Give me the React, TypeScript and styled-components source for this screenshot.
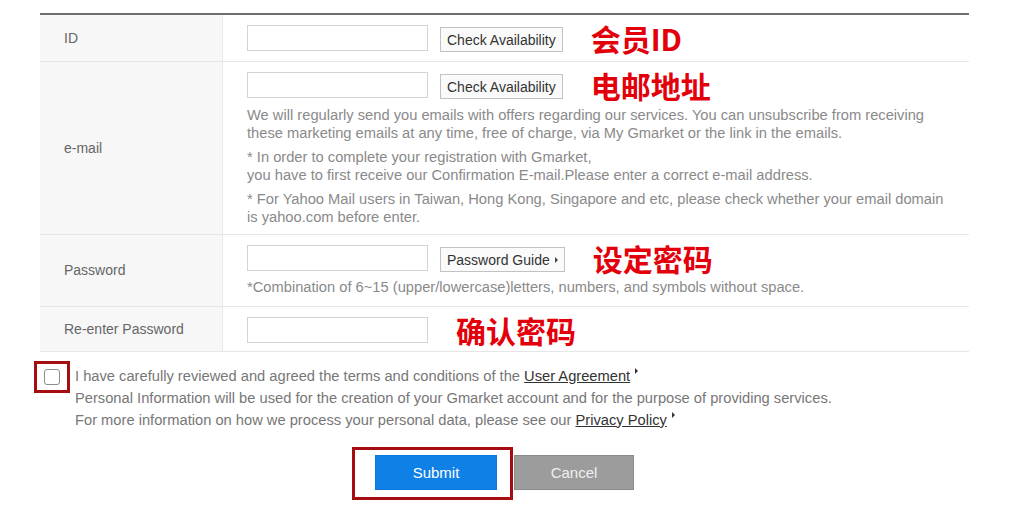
import styled, { createGlobalStyle } from "styled-components";

const GlobalStyle = createGlobalStyle`
  body {
    margin: 0;
    background: #fff;
    font-family: "Liberation Sans", Arial, sans-serif;
  }
`;

const Page = styled.div`
  padding: 13px 0 20px 34px;
  width: 935px;
`;

const FormTable = styled.div`
  margin-left: 6px;
  width: 929px;
  border-top: 2px solid #6e6e6e;
`;

const Row = styled.div`
  display: grid;
  grid-template-columns: 183px 1fr;
  border-bottom: 1px solid #e6e6e6;
`;

const Label = styled.div`
  display: flex;
  align-items: center;
  padding-left: 24px;
  background: #f7f7f7;
  border-right: 1px solid #e9e9e9;
  color: #666;
  font-size: 14px;
`;

const Field = styled.div<{ $bottom?: number }>`
  padding: 10px 0 ${(p) => p.$bottom ?? 9}px 24px;
`;

const Line = styled.div`
  display: flex;
  align-items: center;
  height: 26px;
`;

const TextInput = styled.input`
  box-sizing: border-box;
  width: 181px;
  height: 26px;
  margin: 0;
  border: 1px solid #d4d4d4;
  background: #fff;
`;

const SmallButton = styled.button`
  box-sizing: border-box;
  height: 25px;
  margin: 3px 0 0 12px;
  padding: 0 6px;
  border: 1px solid #c2c2c2;
  background: #fafafa;
  color: #333;
  font-family: inherit;
  font-size: 14px;
  display: flex;
  align-items: center;
  gap: 5px;
`;

const Caret = styled.span<{ $color?: string }>`
  display: inline-block;
  width: 0;
  height: 0;
  border-left: 3px solid ${(p) => p.$color || "#444"};
  border-top: 3px solid transparent;
  border-bottom: 3px solid transparent;
`;

const Note = styled.span`
  margin-left: 28px;
  color: #e3000b;
  font-family: "Noto Sans CJK SC", "Noto Sans", sans-serif;
  font-weight: 700;
  font-size: 30px;
  line-height: 26px;
`;

const Hint = styled.p<{ $gap?: number }>`
  margin: ${(p) => p.$gap ?? 7}px 0 0;
  color: #8a8a8a;
  font-size: 14.7px;
  line-height: 17.5px;
`;

const Agreement = styled.div`
  display: flex;
  align-items: flex-start;
  margin-top: 9px;
`;

const CheckFrame = styled.div`
  padding: 5px 7px;
  border: 3px solid #a50d12;
`;

const CheckBox = styled.span`
  display: block;
  box-sizing: border-box;
  width: 16px;
  height: 16px;
  border: 1px solid #8c8c8c;
  border-radius: 3px;
  background: #fff;
`;

const AgreeText = styled.div`
  margin: 4px 0 0 5px;
  color: #777;
  font-size: 14.7px;
  line-height: 22px;
`;

const Link = styled.a`
  color: #333;
  text-decoration: underline;
`;

const UpCaret = styled(Caret)`
  margin-left: 5px;
  vertical-align: 7px;
`;

const Actions = styled.div`
  display: flex;
  align-items: center;
  margin: 16px 0 0 318px;
`;

const SubmitFrame = styled.div`
  padding: 5px 13px 7px 20px;
  border: 3px solid #a50d12;
`;

const ActionButton = styled.button<{ $primary?: boolean }>`
  box-sizing: border-box;
  width: ${(p) => (p.$primary ? "122px" : "120px")};
  height: 35px;
  margin: ${(p) => (p.$primary ? "0" : "-2px 0 0 1px")};
  border: 1px solid ${(p) => (p.$primary ? "#0b76db" : "#8a8a8a")};
  background: ${(p) => (p.$primary ? "#0f80e6" : "#9c9c9c")};
  color: ${(p) => (p.$primary ? "#fff" : "#f0f0f0")};
  font-family: inherit;
  font-size: 15px;
`;

export default function App() {
  return (
    <Page>
      <GlobalStyle />
      <FormTable>
        <Row>
          <Label>ID</Label>
          <Field $bottom={10}>
            <Line>
              <TextInput />
              <SmallButton>Check Availability</SmallButton>
              <Note>会员ID</Note>
            </Line>
          </Field>
        </Row>
        <Row>
          <Label>e-mail</Label>
          <Field $bottom={8}>
            <Line>
              <TextInput />
              <SmallButton>Check Availability</SmallButton>
              <Note>电邮地址</Note>
            </Line>
            <Hint $gap={9}>
              We will regularly send you emails with offers regarding our services. You can unsubscribe from receiving
              <br />
              these marketing emails at any time, free of charge, via My Gmarket or the link in the emails.
            </Hint>
            <Hint>
              * In order to complete your registration with Gmarket,
              <br />
              you have to first receive our Confirmation E-mail.Please enter a correct e-mail address.
            </Hint>
            <Hint>
              * For Yahoo Mail users in Taiwan, Hong Kong, Singapore and etc, please check whether your email domain
              <br />
              is yahoo.com before enter.
            </Hint>
          </Field>
        </Row>
        <Row>
          <Label>Password</Label>
          <Field>
            <Line>
              <TextInput type="password" />
              <SmallButton>
                Password Guide <Caret />
              </SmallButton>
              <Note>设定密码</Note>
            </Line>
            <Hint $gap={8}>
              *Combination of 6~15 (upper/lowercase)letters, numbers, and symbols without space.
            </Hint>
          </Field>
        </Row>
        <Row>
          <Label>Re-enter Password</Label>
          <Field $bottom={8}>
            <Line>
              <TextInput type="password" />
              <Note>确认密码</Note>
            </Line>
          </Field>
        </Row>
      </FormTable>

      <Agreement>
        <CheckFrame>
          <CheckBox />
        </CheckFrame>
        <AgreeText>
          I have carefully reviewed and agreed the terms and conditions of the <Link>User Agreement</Link>
          <UpCaret $color="#333" />
          <br />
          Personal Information will be used for the creation of your Gmarket account and for the purpose of providing services.
          <br />
          For more information on how we process your personal data, please see our <Link>Privacy Policy</Link>
          <UpCaret $color="#333" />
        </AgreeText>
      </Agreement>

      <Actions>
        <SubmitFrame>
          <ActionButton $primary>Submit</ActionButton>
        </SubmitFrame>
        <ActionButton>Cancel</ActionButton>
      </Actions>
    </Page>
  );
}
